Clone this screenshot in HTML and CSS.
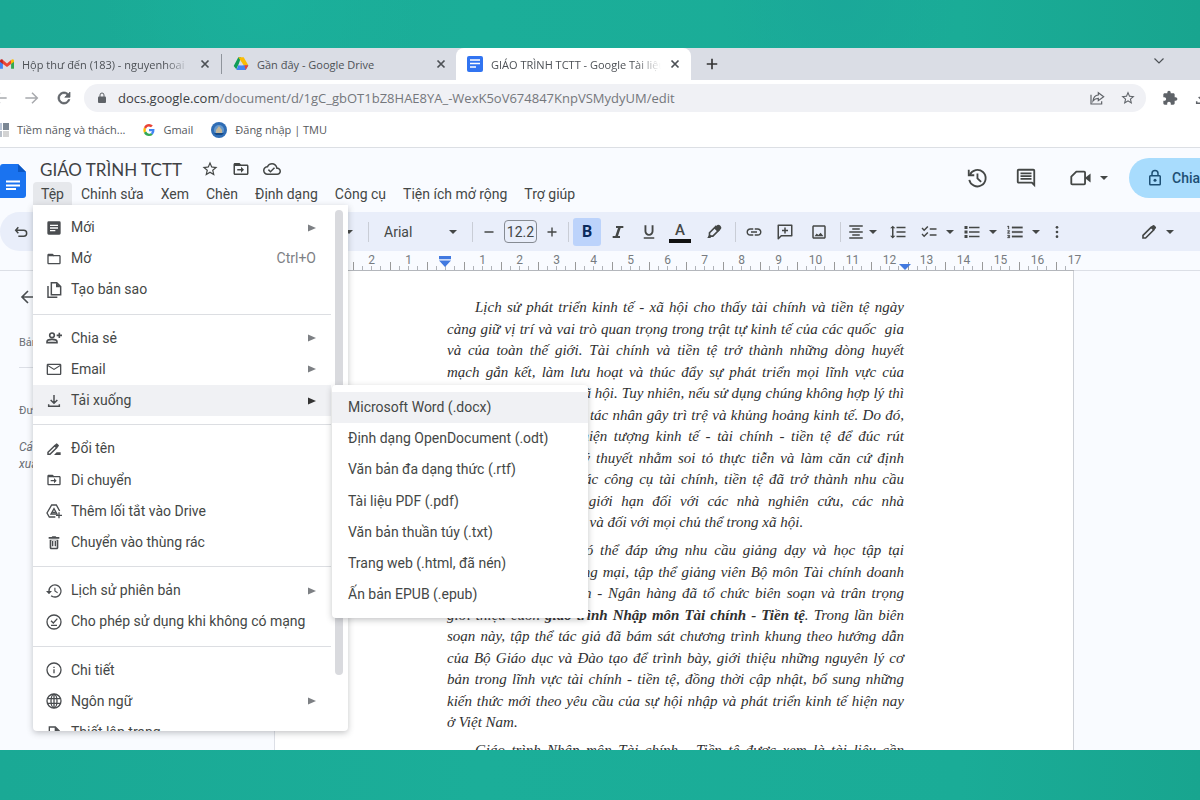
FILE: index.html
```
<!DOCTYPE html>
<html lang="vi">
<head>
<meta charset="utf-8">
<title>GIÁO TRÌNH TCTT - Google Tài liệu</title>
<link rel="stylesheet" href="styles.css">
</head>
<body>
<svg class="defs" aria-hidden="true">
  <symbol id="i-star" viewBox="0 0 24 24"><path d="M22 9.24l-7.19-.62L12 2 9.19 8.63 2 9.24l5.46 4.73L5.82 21 12 17.27 18.18 21l-1.63-7.03L22 9.24zM12 15.4l-3.76 2.27 1-4.28-3.32-2.88 4.38-.38L12 6.1l1.71 4.04 4.38.38-3.32 2.88 1 4.28L12 15.4z"/></symbol>
  <symbol id="i-folder" viewBox="0 0 24 24"><path d="M9.17 6l2 2H20v10H4V6h5.17M10 4H4c-1.1 0-2 .9-2 2v12c0 1.1.9 2 2 2h16c1.1 0 2-.9 2-2V8c0-1.1-.9-2-2-2h-8l-2-2z"/><path d="M3 5h7l2 3H3z"/></symbol>
  <symbol id="i-move" viewBox="0 0 24 24"><path d="M9.17 6l2 2H20v10H4V6h5.17M10 4H4c-1.1 0-2 .9-2 2v12c0 1.1.9 2 2 2h16c1.1 0 2-.9 2-2V8c0-1.1-.9-2-2-2h-8l-2-2z"/><path d="M3 5h7l2 3H3zM12 17l4-4-4-4v3H7v2h5z"/></symbol>
  <symbol id="i-cloud" viewBox="0 0 24 24"><path d="M19.35 10.04C18.67 6.59 15.64 4 12 4 9.11 4 6.6 5.64 5.35 8.04 2.34 8.36 0 10.91 0 14c0 3.31 2.69 6 6 6h13c2.76 0 5-2.24 5-5 0-2.64-2.05-4.78-4.65-4.96zM19 18H6c-2.21 0-4-1.79-4-4 0-2.05 1.53-3.76 3.56-3.97l1.07-.11.5-.95C8.08 7.14 9.94 6 12 6c2.62 0 4.88 1.86 5.39 4.43l.3 1.5 1.53.11c1.56.1 2.78 1.41 2.78 2.96 0 1.65-1.35 3-3 3zm-9-3.82l-2.09-2.09L6.5 13.5 10 17l6.01-6.01-1.41-1.41z"/></symbol>
  <symbol id="i-versions" viewBox="0 0 24 24"><g fill="none" stroke="currentColor" stroke-width="2"><path d="M4.2 8.5A9 9 0 1 1 3.6 14"/><path d="M3 3v6h6"/><path d="M12.5 7v5.3l4 4"/></g></symbol>
  <symbol id="i-comment" viewBox="0 0 24 24"><path d="M22 4c0-1.1-.9-2-2-2H4c-1.1 0-2 .9-2 2v12c0 1.1.9 2 2 2h14l4 4V4zM20 4v13.17L18.83 16H4V4h16zM6 12h12v2H6zm0-3h12v2H6zm0-3h12v2H6z"/></symbol>
  <symbol id="i-meet" viewBox="0 0 24 24"><path d="M8 5h8.500q1 0 1 1v12q0 1-1 1H3.500q-1 0-1-1v-7.500z" fill="none" stroke="currentColor" stroke-width="2" stroke-linejoin="round"/><path d="M18 11.500L23.500 7v10L18 12.500z"/></symbol>
  <symbol id="i-lock" viewBox="0 0 24 24"><g fill="none" stroke="currentColor" stroke-width="2"><rect x="5" y="9" width="14" height="12" rx="1"/><path d="M8 9V6a4 4 0 0 1 8 0v3"/></g><circle cx="12" cy="15" r="2"/></symbol>
  <symbol id="i-lockfill" viewBox="0 0 24 24"><rect x="4" y="9" width="16" height="13" rx="2"/><path d="M8 10V6a4 4 0 0 1 8 0v4" fill="none" stroke="currentColor" stroke-width="2"/></symbol>
  <symbol id="i-undo" viewBox="0 0 24 24"><path d="M8 5L4 9.500 8 14M4 9.500h12a4.500 4.500 0 0 1 0 9H8" fill="none" stroke="currentColor" stroke-width="2.200"/></symbol>
  <symbol id="i-down" viewBox="0 0 8 8"><path d="M0 2h8L4 6z"/></symbol>
  <symbol id="i-right" viewBox="0 0 8 8"><path d="M0 0.500l8 3.500-8 3.500z"/></symbol>
  <symbol id="i-italic" viewBox="0 0 24 24"><path d="M9 3v3h3l-4 12H4v3h11v-3h-3l4-12h4V3z"/></symbol>
  <symbol id="i-underline" viewBox="0 0 24 24"><path d="M12 17c3.310 0 6-2.690 6-6V3h-2.500v8c0 1.930-1.570 3.500-3.500 3.500S8.500 12.930 8.500 11V3H6v8c0 3.310 2.690 6 6 6zm-7 2v2h14v-2H5z"/></symbol>
  <symbol id="i-marker" viewBox="0 0 24 24"><path d="M6 13l8.500-8.500 4.500 4.500-8.500 8.500H6z" fill="none" stroke="currentColor" stroke-width="2.200"/><path d="M12 7l4.500-4.500q2-1 4 1t1 4L17 12zM3 20l3-5 3 3-2 2z"/></symbol>
  <symbol id="i-link" viewBox="0 0 24 24"><path d="M3.900 12c0-1.710 1.390-3.100 3.100-3.100h4V7H7c-2.760 0-5 2.240-5 5s2.240 5 5 5h4v-1.900H7c-1.710 0-3.100-1.390-3.100-3.100zM8 13h8v-2H8v2zm9-6h-4v1.900h4c1.710 0 3.100 1.390 3.100 3.100s-1.390 3.100-3.100 3.100h-4V17h4c2.760 0 5-2.240 5-5s-2.240-5-5-5z"/></symbol>
  <symbol id="i-addcomment" viewBox="0 0 24 24"><path d="M3 21V3h18v14H7z" fill="none" stroke="currentColor" stroke-width="2" stroke-linejoin="round"/><path d="M11 6h2v3h3v2h-3v3h-2v-3H8V9h3z"/></symbol>
  <symbol id="i-image" viewBox="0 0 24 24"><path d="M19 5v14H5V5h14m0-2H5c-1.100 0-2 .9-2 2v14c0 1.100.9 2 2 2h14c1.100 0 2-.9 2-2V5c0-1.100-.9-2-2-2zm-4.860 9.860l-3 3L9 14.140 6 17.500h12z"/></symbol>
  <symbol id="i-center" viewBox="0 0 24 24"><path d="M7 15v2h10v-2H7zm-4 6h18v-2H3v2zm0-8h18v-2H3v2zm4-6v2h10V7H7zM3 3v2h18V3H3z"/></symbol>
  <symbol id="i-spacing" viewBox="0 0 24 24"><path d="M6 7h2.500L5 3.500 1.500 7H4v10H1.500L5 20.500 8.500 17H6V7zm4-2v2h12V5H10zm0 14h12v-2H10v2zm0-6h12v-2H10v2z"/></symbol>
  <symbol id="i-checks" viewBox="0 0 24 24"><path d="M22 7h-9v2h9V7zm0 8h-9v2h9v-2zM5.540 11L2 7.460l1.410-1.410 2.120 2.120 4.240-4.240 1.410 1.410L5.540 11zm0 8L2 15.460l1.410-1.410 2.120 2.120 4.240-4.240 1.410 1.410L5.540 19z"/></symbol>
  <symbol id="i-bullets" viewBox="0 0 24 24"><path d="M2 4h4v4H2zM2 10h4v4H2zM2 16h4v4H2zM8 5h14v2H8zM8 11h14v2H8zM8 17h14v2H8z"/></symbol>
  <symbol id="i-numbers" viewBox="0 0 24 24"><path d="M2 17h2v.5H3v1h1v.5H2v1h3v-4H2v1zm1-9h1V4H2v1h1v3zm-1 3h1.800L2 13.100v.9h3v-1H3.200L5 10.900V10H2v1zm6-6v2h14V5H8zm0 14h14v-2H8v2zm0-6h14v-2H8v2z" stroke="currentColor" stroke-width=".4"/></symbol>
  <symbol id="i-dots" viewBox="0 0 24 24"><circle cx="12" cy="5" r="2"/><circle cx="12" cy="12" r="2"/><circle cx="12" cy="19" r="2"/></symbol>
  <symbol id="i-pencil" viewBox="0 0 24 24"><path d="M4 20v-3.500L15 5.500 18.500 9 7.500 20z" fill="none" stroke="currentColor" stroke-width="2.200"/><path d="M14 6l3-3q1-1 2 0l2 2q1 1 0 2l-3 3z"/></symbol>
  <symbol id="i-doc" viewBox="0 0 24 24"><path fill-rule="evenodd" d="M4 2h16q2 0 2 2v16q0 2-2 2H4q-2 0-2-2V4q0-2 2-2zM6 7v2h12V7zm0 4v2h12v-2zm0 4v2h8v-2z"/></symbol>
  <symbol id="i-copy" viewBox="0 0 24 24"><g fill="none" stroke="currentColor" stroke-width="2.200"><path d="M8 1h8l6 6v12H8z"/><path d="M3 6v17h14"/></g><path d="M15 1v7h7z"/></symbol>
  <symbol id="i-person" viewBox="0 0 24 24"><g fill="none" stroke="currentColor" stroke-width="2.400"><circle cx="9" cy="8" r="3.500"/><path d="M1.500 19v-1.500q0-3.500 7.500-3.500t7.500 3.500V19zM20 4v8M16 8h8"/></g></symbol>
  <symbol id="i-mail" viewBox="0 0 24 24"><path d="M23 6c0-1.100-.9-2-2-2H3c-1.100 0-2 .9-2 2v13c0 1.100.9 2 2 2h18c1.100 0 2-.9 2-2V6zm-2 0l-9 5.500L3 6h18zm0 13H3V8l9 5.500L21 8v11z"/></symbol>
  <symbol id="i-download" viewBox="0 0 24 24"><path d="M12 3v12M7 10.500l5 5 5-5M4 17v3h16v-3" fill="none" stroke="currentColor" stroke-width="2.200"/></symbol>
  <symbol id="i-rename" viewBox="0 0 24 24"><path d="M3 20v-3L13 7l3 3L6 20z" fill="none" stroke="currentColor" stroke-width="2.200"/><path d="M12.500 6.500L15 4q1-1 2 0l2 2q1 1 0 2l-2.500 2.500zM12 21l4-4h6v4z"/></symbol>
  <symbol id="i-shortcut" viewBox="0 0 24 24"><g fill="none" stroke="currentColor" stroke-width="2"><path d="M14 21H5L1.500 15 8.500 3h7l5 9M7.500 16.500l4.500-8 4.500 8zM10 14h4"/><path d="M19.500 14v9M15 18.500h9"/></g></symbol>
  <symbol id="i-trash" viewBox="0 0 24 24"><path d="M16 8v11H8V8h8m-1.500-6h-5l-1 1H4v2.500h16V3h-4.500l-1-1zM18.500 7h-13v12c0 1.100.9 2.500 2.500 2.500h8c1.600 0 2.500-1.400 2.500-2.500V7zM9 9h2v8H9zM13 9h2v8h-2z"/></symbol>
  <symbol id="i-history" viewBox="0 0 24 24"><path d="M13.500 2C8 2 3.500 6.500 3.500 12H0l4.500 5L9 12H5.500a8 8 0 1 1 3 6.200l-1.500 1.500A10 10 0 1 0 13.500 2zM12.500 7v5.500l4.500 2.700.8-1.300-3.600-2.200V7z"/></symbol>
  <symbol id="i-offline" viewBox="0 0 24 24"><g fill="none" stroke="currentColor" stroke-width="2"><circle cx="12" cy="12" r="10.500"/><path d="M7.500 10l3.500 3.500L17 7M7.500 17h9"/></g></symbol>
  <symbol id="i-info" viewBox="0 0 24 24"><g fill="none" stroke="currentColor" stroke-width="2"><circle cx="12" cy="12" r="10.500"/><path d="M12 11v6M12 7v2"/></g></symbol>
  <symbol id="i-globe" viewBox="0 0 24 24"><g fill="none" stroke="currentColor" stroke-width="2"><circle cx="12" cy="12" r="10.500"/><ellipse cx="12" cy="12" rx="4.500" ry="10"/><path d="M2.500 8.500h19M2.500 15.500h19M12 2v20"/></g></symbol>
  <symbol id="i-page" viewBox="0 0 24 24"><path d="M5 3h9l6 6v12H5z" fill="none" stroke="currentColor" stroke-width="2"/><path d="M13 3v7h7z"/></symbol>
  <symbol id="i-close" viewBox="0 0 24 24"><path d="M5 5l14 14M19 5L5 19" fill="none" stroke="currentColor" stroke-width="3.500"/></symbol>
  <symbol id="i-plus" viewBox="0 0 24 24"><path d="M12 3v18M3 12h18" fill="none" stroke="currentColor" stroke-width="2.800"/></symbol>
  <symbol id="i-minus" viewBox="0 0 24 24"><path d="M3 12h18" fill="none" stroke="currentColor" stroke-width="2.800"/></symbol>
  <symbol id="i-back" viewBox="0 0 24 24"><path d="M12 4l-8 8 8 8M4 12h18" fill="none" stroke="currentColor" stroke-width="2.200"/></symbol>
  <symbol id="i-forward" viewBox="0 0 24 24"><path d="M12 4l8 8-8 8M20 12H2" fill="none" stroke="currentColor" stroke-width="2.200"/></symbol>
  <symbol id="i-reload" viewBox="0 0 24 24"><path d="M17.650 6.350C16.200 4.900 14.210 4 12 4c-4.420 0-7.990 3.580-7.990 8s3.570 8 7.990 8c3.730 0 6.840-2.550 7.730-6h-2.080c-.82 2.330-3.040 4-5.650 4-3.310 0-6-2.690-6-6s2.690-6 6-6c1.660 0 3.140.69 4.220 1.780L13 11h7V4l-2.350 2.350z" stroke="currentColor"/></symbol>
  <symbol id="i-share" viewBox="0 0 24 24"><path d="M3 7v14h16v-4M14 4l8 6-8 6v-3.500q-5 0-8 4 1-8.500 8-9z" fill="none" stroke="currentColor" stroke-width="1.800"/></symbol>
  <symbol id="i-puzzle" viewBox="0 0 24 24"><path d="M20.500 11H19V7c0-1.100-.9-2-2-2h-4V3.500C13 2.120 11.880 1 10.500 1S8 2.120 8 3.500V5H4c-1.100 0-2 .9-2 2v3.800h1.500c1.490 0 2.700 1.210 2.700 2.700s-1.210 2.700-2.700 2.700H2V20c0 1.100.9 2 2 2h3.800v-1.500c0-1.490 1.210-2.700 2.700-2.700 1.490 0 2.700 1.210 2.700 2.700V22H17c1.100 0 2-.9 2-2v-4h1.500c1.380 0 2.500-1.120 2.500-2.500S21.880 11 20.500 11z"/></symbol>
  <symbol id="i-chevron" viewBox="0 0 24 24"><path d="M3 7l9 9 9-9" fill="none" stroke="currentColor" stroke-width="2.400"/></symbol>
</svg>

<main class="window">
  <nav class="tabs" aria-label="Thẻ trình duyệt">
    <div class="tab tab-mail">
      <svg class="icon" viewBox="0 0 24 24"><path fill="#4285f4" d="M0 6v14h5V10z"/><path fill="#34a853" d="M19 10v10h5V6z"/><path fill="#ea4335" d="M5 5l7 6 7-6v7l-7 5-7-5z"/><path fill="#c5221f" d="M0 7q0-4 4-3l1 1v7L0 8z"/><path fill="#fbbc04" d="M19 5q4-3 5 1v2l-5 4z"/></svg>
      <span class="tab-title fade">Hộp thư đến (183) - nguyenhoai</span>
      <button class="bare" aria-label="Đóng"><svg class="icon s12"><use href="#i-close"/></svg></button>
    </div>
    <div class="tab tab-drive">
      <svg class="icon" viewBox="0 0 24 24"><path fill="#0f9d58" d="M8 2h4l-3 9-4 9L1 15z"/><path fill="#fbbc04" d="M8 2h8l7 12h-7z"/><path fill="#4285f4" d="M8 14h15l-4 7H5z"/><path fill="#ea4335" d="M17 14h6l-4 7z"/><path fill="#d9dde5" d="M12 9l3 5H9z"/></svg>
      <span class="tab-title">Gần đây - Google Drive</span>
      <button class="bare" aria-label="Đóng"><svg class="icon s12"><use href="#i-close"/></svg></button>
    </div>
    <div class="tab tab-docs">
      <svg class="icon" viewBox="0 0 16 16"><rect width="16" height="16" rx="2" fill="#3174f1"/><path d="M3 4h10M3 7.500h10M3 11h6" stroke="#fff" stroke-width="1.600"/></svg>
      <span class="tab-title fade">GIÁO TRÌNH TCTT - Google Tài liệu</span>
      <button class="bare" aria-label="Đóng"><svg class="icon s12"><use href="#i-close"/></svg></button>
    </div>
    <button class="bare new-tab" aria-label="Thẻ mới"><svg class="icon"><use href="#i-plus"/></svg></button>
    <button class="bare tab-search" aria-label="Tìm thẻ"><svg class="icon s12"><use href="#i-chevron"/></svg></button>
  </nav>

  <div class="address">
    <button class="bare faint crop" aria-label="Quay lại"><svg class="icon"><use href="#i-back"/></svg></button>
    <button class="bare faint" aria-label="Tiến"><svg class="icon"><use href="#i-forward"/></svg></button>
    <button class="bare" aria-label="Tải lại"><svg class="icon s18"><use href="#i-reload"/></svg></button>
    <div class="omnibox">
      <svg class="icon s12"><use href="#i-lockfill"/></svg>
      <span class="url"><b>docs.google.com</b>/document/d/1gC_gbOT1bZ8HAE8YA_-WexK5oV674847KnpVSMydyUM/edit</span>
      <button class="bare" aria-label="Chia sẻ trang"><svg class="icon"><use href="#i-share"/></svg></button>
      <button class="bare" aria-label="Đánh dấu trang"><svg class="icon"><use href="#i-star"/></svg></button>
    </div>
    <button class="bare" aria-label="Tiện ích"><svg class="icon"><use href="#i-puzzle"/></svg></button>
    <button class="bare" aria-label="Tải xuống"><svg class="icon"><use href="#i-download"/></svg></button>
  </div>

  <nav class="bookmarks" aria-label="Dấu trang">
    <a href="#"><svg class="icon" viewBox="0 0 16 16"><path fill="#b9c4d6" d="M0 1h9v7H0z"/><path fill="#7b8794" d="M10 1h6v7h-6z"/><path fill="#b9c0ca" d="M0 9h9v6H0z"/><path fill="#d3d3d3" d="M10 9h6v6h-6z"/></svg>Tiềm năng và thách...</a>
    <a href="#"><svg class="icon s12" viewBox="0 0 24 24"><path fill="#4285f4" d="M23 10H12v4.500h6q-.7 2.500-2.500 3.800l4 3Q23.500 18 23 10z"/><path fill="#34a853" d="M1.800 17.500Q5 24 12 24q4.500 0 7.500-2.700l-4-3q-6 3.200-9.500-3.800z"/><path fill="#fbbc04" d="M2 6.500Q-.5 12 1.800 17.500L6 14.500q-1-2.500 0-5z"/><path fill="#ea4335" d="M2 6.500Q5.500 0 12 0q4.500 0 7.700 3L16 6.500Q9 2 6 9.500z"/></svg>Gmail</a>
    <a href="#"><svg class="icon" viewBox="0 0 16 16"><circle cx="8" cy="8" r="8" fill="#2f6db5"/><circle cx="8" cy="8" r="5" fill="#6799cc"/><path fill="#c4b79a" d="M8 4l3 4v3H5V8z"/><path fill="#174a86" d="M3 11h10l-2 2H5z"/></svg>Đăng nhập | TMU</a>
  </nav>

  <section class="app">
    <header class="head">
      <svg class="logo" viewBox="0 0 26 34"><path fill="#1a73f0" d="M0 3q0-3 3-3h15l8 8v23q0 3-3 3H0z"/><path fill="#0b57c4" d="M18 0l8 8h-8z"/><path d="M6 17.500h14M6 21.500h14M6 25h10" stroke="#fff" stroke-width="2"/></svg>
      <div class="heading">
        <div class="title-row">
          <h1>GIÁO TRÌNH TCTT</h1>
          <button class="bare" aria-label="Gắn dấu sao"><svg class="icon s18"><use href="#i-star"/></svg></button>
          <button class="bare" aria-label="Di chuyển"><svg class="icon s18"><use href="#i-move"/></svg></button>
          <button class="bare" aria-label="Đã lưu"><svg class="icon s18"><use href="#i-cloud"/></svg></button>
        </div>
        <nav class="menubar">
          <button class="open" aria-expanded="true">Tệp</button><button>Chỉnh sửa</button><button>Xem</button><button>Chèn</button><button>Định dạng</button><button>Công cụ</button><button>Tiện ích mở rộng</button><button>Trợ giúp</button>
        </nav>
      </div>
      <div class="actions">
        <button class="bare" aria-label="Lịch sử"><svg class="icon s22"><use href="#i-versions"/></svg></button>
        <button class="bare" aria-label="Nhận xét"><svg class="icon s22"><use href="#i-comment"/></svg></button>
        <button class="bare meet" aria-label="Meet"><svg class="icon s22"><use href="#i-meet"/></svg><svg class="icon s8"><use href="#i-down"/></svg></button>
        <button class="share"><svg class="icon s18"><use href="#i-lock"/></svg>Chia sẻ</button>
      </div>
    </header>

    <div class="toolbar" role="toolbar">
      <button class="bare tool undo" aria-label="Hoàn tác"><svg class="icon"><use href="#i-undo"/></svg></button>
      <button class="bare style" aria-label="Kiểu"><svg class="icon s8"><use href="#i-down"/></svg></button>
      <i class="rule"></i>
      <button class="bare font">Arial<svg class="icon s8"><use href="#i-down"/></svg></button>
      <i class="rule"></i>
      <div class="size">
        <button class="bare" aria-label="Giảm"><svg class="icon s12"><use href="#i-minus"/></svg></button>
        <input aria-label="Cỡ chữ" value="12.2">
        <button class="bare" aria-label="Tăng"><svg class="icon s12"><use href="#i-plus"/></svg></button>
      </div>
      <i class="rule"></i>
      <div class="group">
        <button class="bare tool on" aria-label="In đậm"><b>B</b></button>
        <button class="bare tool" aria-label="In nghiêng"><svg class="icon"><use href="#i-italic"/></svg></button>
        <button class="bare tool" aria-label="Gạch chân"><svg class="icon s18"><use href="#i-underline"/></svg></button>
        <button class="bare tool color" aria-label="Màu chữ">A</button>
        <button class="bare tool wide" aria-label="Đánh dấu"><svg class="icon s18"><use href="#i-marker"/></svg></button>
      </div>
      <i class="rule"></i>
      <div class="group">
        <button class="bare tool" aria-label="Liên kết"><svg class="icon s18"><use href="#i-link"/></svg></button>
        <button class="bare tool" aria-label="Thêm nhận xét"><svg class="icon s18"><use href="#i-addcomment"/></svg></button>
        <button class="bare tool wide" aria-label="Hình ảnh"><svg class="icon s18"><use href="#i-image"/></svg></button>
      </div>
      <i class="rule"></i>
      <div class="lists">
        <button class="bare combo near" aria-label="Căn chỉnh"><svg class="icon s18"><use href="#i-center"/></svg><svg class="icon s8"><use href="#i-down"/></svg></button>
        <button class="bare combo" aria-label="Giãn dòng"><svg class="icon s18"><use href="#i-spacing"/></svg></button>
        <button class="bare combo" aria-label="Danh sách kiểm"><svg class="icon s18"><use href="#i-checks"/></svg><svg class="icon s8"><use href="#i-down"/></svg></button>
        <button class="bare combo" aria-label="Dấu đầu dòng"><svg class="icon s18"><use href="#i-bullets"/></svg><svg class="icon s8"><use href="#i-down"/></svg></button>
        <button class="bare combo" aria-label="Đánh số"><svg class="icon s18"><use href="#i-numbers"/></svg><svg class="icon s8"><use href="#i-down"/></svg></button>
        <button class="bare combo" aria-label="Thêm"><svg class="icon"><use href="#i-dots"/></svg></button>
      </div>
      <button class="bare combo mode" aria-label="Chế độ"><svg class="icon s18"><use href="#i-pencil"/></svg><svg class="icon s8"><use href="#i-down"/></svg></button>
    </div>

    <div class="work">
      <aside class="outline">
        <svg class="icon s18"><use href="#i-back"/></svg>
        <p class="ol-top">Bản tóm tắt</p>
        <p class="ol-mid">Đường viền</p>
        <p class="ol-note">Các tiêu đề sẽ<br>xuất hiện ở đây.</p>
      </aside>
      <div class="sheet-col">
        <div class="ruler">
          <span>2</span><span>1</span><span class="mark both"></span><span>1</span><span>2</span><span>3</span><span>4</span><span>5</span><span>6</span><span>7</span><span>8</span><span>9</span><span>10</span><span>11</span><span class="end">12<i class="mark"></i></span><span>13</span><span>14</span><span>15</span><span>16</span><span>17</span>
        </div>
        <article class="sheet">
          <p>
            <span class="first">Lịch sử phát triển kinh tế - xã hội cho thấy tài chính và tiền tệ ngày</span>
            <span>càng giữ vị trí và vai trò quan trọng trong trật tự kinh tế của các quốc&nbsp; gia</span>
            <span>và của toàn thế giới. Tài chính và tiền tệ trở thành những dòng huyết</span>
            <span>mạch gắn kết, làm lưu hoạt và thúc đẩy sự phát triển mọi lĩnh vực của</span>
            <span>nền kinh tế quốc gia, xã hội. Tuy nhiên, nếu sử dụng chúng không hợp lý thì</span>
            <span>chúng có thể trở thành tác nhân gây trì trệ và khủng hoảng kinh tế. Do đó,</span>
            <span>việc nghiên cứu các hiện tượng kinh tế - tài chính - tiền tệ để đúc rút</span>
            <span>thành những vấn đề lý thuyết nhằm soi tỏ thực tiễn và làm căn cứ định</span>
            <span>hướng việc sử dụng các công cụ tài chính, tiền tệ đã trở thành nhu cầu</span>
            <span>không những chỉ có giới hạn đối với các nhà nghiên cứu, các nhà</span>
            <span class="last">quản lý mà còn rất cần và đối với mọi chủ thể trong xã hội.</span>
          </p>
          <p>
            <span class="first">Nhằm mục tiêu có thể đáp ứng nhu cầu giảng dạy và học tập tại</span>
            <span>Trường Đại học Thương mại, tập thể giảng viên Bộ môn Tài chính doanh</span>
            <span>nghiệp, khoa Tài chính - Ngân hàng đã tổ chức biên soạn và trân trọng</span>
            <span>giới thiệu cuốn <b>giáo trình Nhập môn Tài chính - Tiền tệ</b>. Trong lần biên</span>
            <span>soạn này, tập thể tác giả đã bám sát chương trình khung theo hướng dẫn</span>
            <span>của Bộ Giáo dục và Đào tạo để trình bày, giới thiệu những nguyên lý cơ</span>
            <span>bản trong lĩnh vực tài chính - tiền tệ, đồng thời cập nhật, bổ sung những</span>
            <span>kiến thức mới theo yêu cầu của sự hội nhập và phát triển kinh tế hiện nay</span>
            <span class="last">ở Việt Nam.</span>
          </p>
          <p>
            <span class="first">Giáo trình Nhập môn Tài chính - Tiền tệ được xem là tài liệu cần</span>
          </p>
        </article>
      </div>
      <div class="side"></div>
    </div>

    <div class="menu" role="menu">
      <div class="items">
        <button role="menuitem"><svg class="icon"><use href="#i-doc"/></svg>Mới<svg class="icon s8"><use href="#i-right"/></svg></button>
        <button role="menuitem"><svg class="icon"><use href="#i-folder"/></svg>Mở<kbd>Ctrl+O</kbd></button>
        <button role="menuitem"><svg class="icon"><use href="#i-copy"/></svg>Tạo bản sao</button>
        <hr>
        <button role="menuitem"><svg class="icon"><use href="#i-person"/></svg>Chia sẻ<svg class="icon s8"><use href="#i-right"/></svg></button>
        <button role="menuitem"><svg class="icon"><use href="#i-mail"/></svg>Email<svg class="icon s8"><use href="#i-right"/></svg></button>
        <button role="menuitem" class="hover"><svg class="icon"><use href="#i-download"/></svg>Tải xuống<svg class="icon s8"><use href="#i-right"/></svg></button>
        <hr>
        <button role="menuitem"><svg class="icon"><use href="#i-rename"/></svg>Đổi tên</button>
        <button role="menuitem"><svg class="icon"><use href="#i-move"/></svg>Di chuyển</button>
        <button role="menuitem"><svg class="icon"><use href="#i-shortcut"/></svg>Thêm lối tắt vào Drive</button>
        <button role="menuitem"><svg class="icon"><use href="#i-trash"/></svg>Chuyển vào thùng rác</button>
        <hr>
        <button role="menuitem"><svg class="icon"><use href="#i-history"/></svg>Lịch sử phiên bản<svg class="icon s8"><use href="#i-right"/></svg></button>
        <button role="menuitem"><svg class="icon"><use href="#i-offline"/></svg>Cho phép sử dụng khi không có mạng</button>
        <hr>
        <button role="menuitem"><svg class="icon"><use href="#i-info"/></svg>Chi tiết</button>
        <button role="menuitem"><svg class="icon"><use href="#i-globe"/></svg>Ngôn ngữ<svg class="icon s8"><use href="#i-right"/></svg></button>
        <button role="menuitem"><svg class="icon"><use href="#i-page"/></svg>Thiết lập trang</button>
      </div>
      <div class="track"><div class="thumb"></div></div>
    </div>

    <div class="menu submenu" role="menu">
      <div class="items">
        <button role="menuitem" class="hover">Microsoft Word (.docx)</button>
        <button role="menuitem">Định dạng OpenDocument (.odt)</button>
        <button role="menuitem">Văn bản đa dạng thức (.rtf)</button>
        <button role="menuitem">Tài liệu PDF (.pdf)</button>
        <button role="menuitem">Văn bản thuần túy (.txt)</button>
        <button role="menuitem">Trang web (.html, đã nén)</button>
        <button role="menuitem">Ấn bản EPUB (.epub)</button>
      </div>
    </div>
  </section>
</main>
</body>
</html>
```

FILE: styles.css
```
* { box-sizing: border-box; }

body {
  margin: 0;
  height: 100vh;
  padding: 48px 0 50px;
  overflow: hidden;
  color: #444746;
  font: 14px Roboto, "Liberation Sans", sans-serif;
  background:
    radial-gradient(circle at 22% 0, #1bb09b 0, transparent 160px),
    radial-gradient(circle at 70% 0, #1aa899 0, transparent 120px),
    linear-gradient(90deg, #1aa995, #1bae99 40%, #1aac97 80%, #18a58f);
}

.defs { position: absolute; width: 0; height: 0; }

.icon { width: 16px; height: 16px; flex: none; display: block; fill: currentColor; }
.s8 { width: 8px; height: 8px; }
.s12 { width: 12px; height: 12px; }
.s18 { width: 18px; height: 18px; }
.s22 { width: 22px; height: 22px; }

button { font: inherit; color: inherit; border: 0; background: none; padding: 0; margin: 0; white-space: nowrap; }
.bare { display: flex; align-items: center; justify-content: center; flex: none; }

.window { height: 100%; display: flex; flex-direction: column; overflow: hidden; background: #fff; }

/* browser chrome */
.tabs { display: flex; height: 32px; flex: none; background: #dadde5; font: 11px "Open Sans", "Noto Sans", sans-serif; color: #4d5156; }
.tab { display: flex; align-items: center; gap: 8px; flex: none; }
.tab-title { flex: 1; overflow: hidden; white-space: nowrap; }
.fade { mask-image: linear-gradient(90deg, #000 85%, transparent); }
.tab-mail { width: 222px; padding-right: 9px; border-right: 1px solid #8f949c; border-image: linear-gradient(transparent 20%, #8f949c 20%, #8f949c 80%, transparent 80%) 1; }
.tab-mail .icon:first-child { width: 14px; }
.tab-drive { width: 234px; padding: 0 9px 0 11px; }
.tab-docs { width: 235px; padding: 0 10px 0 11px; background: #fff; border-radius: 8px 8px 0 0; }
.new-tab { width: 43px; padding-right: 1px; color: #333; }
.new-tab .icon { width: 14px; height: 14px; }
.tab-search { margin-left: auto; padding: 0 35px 6px 0; }

.address { display: flex; align-items: center; gap: 16px; height: 36px; flex: none; margin-right: -10px; color: #5f6368; }
.faint { color: #a7a9ad; }
.crop { width: 8px; justify-content: flex-end; overflow: hidden; }
.address .s18 { margin: 0 -1px; }
.omnibox { flex: 1; display: flex; align-items: center; gap: 15px; height: 28px; padding: 0 10px 0 12px; margin-left: -4px; border-radius: 14px; background: #f0f1f5; }
.url { flex: 1; margin-left: -5px; overflow: hidden; white-space: nowrap; font: 13px "Open Sans", "Noto Sans", sans-serif; color: #74777c; }
.url b { font-weight: 400; color: #3c4043; }

.bookmarks { display: flex; gap: 18px; height: 32px; flex: none; padding-bottom: 4px; border-bottom: 1px solid #dcdfe4; font: 11px "Open Sans", "Noto Sans", sans-serif; }
.bookmarks a { display: flex; align-items: center; gap: 8px; color: #55585c; text-decoration: none; }
.bookmarks a:first-child { margin-left: -7px; }

/* application header */
.app { position: relative; flex: 1; min-height: 0; display: flex; flex-direction: column; background: #f9fbff; }
.head { display: flex; height: 64px; flex: none; overflow: hidden; }
.logo { width: 26px; height: 34px; margin-top: 16px; flex: none; }
.heading { display: flex; flex-direction: column; margin-left: 7px; padding-top: 8px; }
.title-row { display: flex; align-items: center; gap: 13px; height: 26px; padding-left: 7px; }
h1 { margin: 0 6px 0 0; font: 17px Lato, Roboto, sans-serif; color: #3f4245; white-space: nowrap; }
.menubar { display: flex; gap: 1px; }
.menubar button { height: 24px; padding: 0 8px; border-radius: 4px 4px 0 0; }
.menubar .open { background: #e6e8ec; }
.actions { display: flex; align-items: center; gap: 27px; margin-left: auto; margin-right: -60px; padding-bottom: 4px; }
.meet { gap: 9px; margin-left: 5px; }
.share { display: flex; align-items: center; gap: 8px; width: 131px; height: 40px; margin-left: -6px; padding-left: 17px; border-radius: 20px; background: #a8dcfd; color: #1d4f74; font-weight: 500; }

/* formatting toolbar */
.toolbar { display: flex; align-items: center; height: 39px; flex: none; padding-left: 7px; overflow: hidden; background: #e9eefa; border-radius: 20px 0 0 20px; }
.rule { width: 1px; height: 20px; flex: none; margin: 0 4px; background: #c9cdd6; }
.tool { width: 28px; height: 28px; border-radius: 3px; }
.wide { width: 34px; }
.on { background: #bcd3fb; color: #0b2a5c; font-size: 16px; }
.color { height: 22px; margin-top: 3px; border-bottom: 4px solid #111; border-radius: 0; width: 22px; margin-left: 3px; margin-right: 3px; font-size: 15px; font-weight: 500; }
.style { width: 12px; margin-left: 308px; margin-right: 9px; }
.font { width: 95px; padding: 0 11px; justify-content: space-between; }
.size { display: flex; align-items: center; gap: 3px; }
.size button { width: 24px; height: 24px; }
.size input { width: 33px; height: 23px; padding: 0; border: 1px solid #868b93; border-radius: 4px; background: none; color: inherit; font: inherit; text-align: center; }
.group { display: flex; gap: 3px; }
.lists { display: flex; gap: 9px; margin-left: 2px; }
.combo { gap: 8px; }
.near { gap: 4px; margin-right: 3px; }
.near + .combo { margin-right: 4px; }
.mode { margin-left: auto; margin-right: 26px; }

/* document area */
.work { flex: 1; min-height: 0; display: flex; overflow: hidden; }
.outline { width: 275px; flex: none; margin-top: 19px; border-top: 1px solid #dcdfe6; border-right: 1px solid #dcdfe6; padding: 17px 19px; font-size: 11px; color: #6b6f75; }
.outline .icon { color: #4a4d50; }
.outline p { margin: 0; }
.outline .ol-top { padding: 30px 0 18px; border-bottom: 1px solid #dcdfe6; }
.outline .ol-mid { padding: 36px 0 22px; }
.outline .ol-note { font-style: italic; font-size: 12px; line-height: 17px; }
.sheet-col { width: 799px; flex: none; display: flex; flex-direction: column; }
.side { flex: 1; margin-top: 19px; border-top: 1px solid #dcdfe6; }

.ruler {
  display: flex;
  height: 20px;
  flex: none;
  padding-left: 78px;
  border-bottom: 1px solid #b4b7bc;
  font-size: 12px;
  color: #777b80;
  background:
    repeating-linear-gradient(90deg, #999 0 1px, transparent 1px 37px) 78px 11px / 100% 8px no-repeat,
    repeating-linear-gradient(90deg, transparent 0 9px, #b0b3b8 9px 10px, transparent 10px 18px, #b0b3b8 18px 19px, transparent 19px 27px, #b0b3b8 27px 28px, transparent 28px 37px) 78px 15px / 100% 4px no-repeat;
}
.ruler span { width: 37px; flex: none; padding-top: 2px; text-align: center; }
.ruler .both::before, .end .mark::before { content: ""; display: block; width: 12px; height: 6px; background: #4179e0; clip-path: polygon(0 0, 100% 0, 50% 100%); }
.ruler .both { padding: 5px 0 0 12px; }
.ruler .both::before { height: 11px; clip-path: polygon(0 0, 100% 0, 100% 30%, 0 30%, 0 42%, 100% 42%, 50% 100%, 0 42%); }
.ruler .end { position: relative; }
.end .mark { position: absolute; right: -3px; bottom: 0; }

.sheet { flex: 1; padding: 26px 169px 0 172px; border-right: 1px solid #cfd2d8; background: #fff; color: #303030; font: italic 15px/1.437 "Liberation Serif", "Times New Roman", serif; }
.sheet p { margin: 0 0 6px; }
.sheet span { display: block; text-align: justify; text-align-last: justify; white-space: nowrap; }
.sheet .first { padding-left: 28px; }
.sheet .last { text-align-last: left; }

/* menus */
.menu { position: absolute; left: 33px; top: 57px; bottom: 19px; width: 315px; display: flex; overflow: hidden; background: #fff; border-radius: 0 0 4px 4px; box-shadow: 0 2px 6px rgba(60, 64, 67, .3); line-height: 2.23; }
.items { flex: 1; padding-top: 7px; }
.menu button { display: flex; align-items: center; width: 100%; padding: 0 15px 0 13px; line-height: inherit; text-align: left; }
.menu .icon:first-child { margin-right: 9px; color: #4a4d50; }
.menu .s8, .menu kbd { margin-left: auto; font: inherit; color: #7d8084; }
.menu hr { height: 1px; margin: 8px 0; border: 0; background: #dcdee2; }
.menu .hover { background: #f0f1f4; }
.menu .hover .s8 { color: #333; }
.track { width: 17px; padding: 5px 5px 56px 4px; }
.thumb { height: 100%; border-radius: 4px; background: #d9dade; }
.submenu { left: 332px; top: 237px; bottom: auto; width: 256px; padding-bottom: 7px; border-radius: 4px; }
.submenu button { padding-left: 16px; }
```
